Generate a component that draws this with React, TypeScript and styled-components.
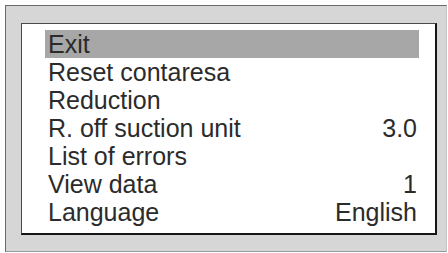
import * as React from 'react';
import styled, { createGlobalStyle } from 'styled-components';

const GlobalStyle = createGlobalStyle`
    html, body {
        margin: 0;
        padding: 0;
        background: #fff;
    }
`;

const Frame = styled.div`
    box-sizing: border-box;
    margin: 5px 0 0 5px;
    width: 442px;
    height: 247px;
    display: flex;
    padding: 17px 9px 16px 15px;
    background-color: #d6d6d6;
    border-top: 1px solid #6a6a6a;
    border-left: 1px solid #6a6a6a;
    border-right: 1px solid #c4c4c4;
    border-bottom: 1px solid #9a9a9a;
`;

const Screen = styled.div`
    flex: 1;
    box-sizing: border-box;
    background-color: #fff;
    border-top: 1px solid #4a4a4a;
    border-left: 1px solid #4a4a4a;
    border-right: 2px solid #151515;
    border-bottom: 2px solid #151515;
    padding: 6px 16px 7px 23px;
`;

const Menu = styled.ul`
    list-style: none;
    margin: 0;
    padding: 0;
`;

const MenuRow = styled.li<{ selected?: boolean }>`
    display: flex;
    justify-content: space-between;
    align-items: center;
    height: 28px;
    padding: 0 2px 0 3px;
    background-color: ${props => (props.selected ? '#a7a7a7' : 'transparent')};
    font-family: 'Liberation Sans', Arial, sans-serif;
    font-size: 25px;
    line-height: 28px;
    color: #2b2b2b;
    white-space: nowrap;
`;

const Label = styled.span``;
const Value = styled.span``;

const rows = [
    { label: 'Exit', value: '', selected: true },
    { label: 'Reset contaresa', value: '' },
    { label: 'Reduction', value: '' },
    { label: 'R. off suction unit', value: '3.0' },
    { label: 'List of errors', value: '' },
    { label: 'View data', value: '1' },
    { label: 'Language', value: 'English' },
];

const App = () => {
    return (
        <>
            <GlobalStyle />
            <Frame>
                <Screen>
                    <Menu>
                        {rows.map(r => (
                            <MenuRow key={r.label} selected={r.selected}>
                                <Label>{r.label}</Label>
                                <Value>{r.value}</Value>
                            </MenuRow>
                        ))}
                    </Menu>
                </Screen>
            </Frame>
        </>
    );
};

export default App;
